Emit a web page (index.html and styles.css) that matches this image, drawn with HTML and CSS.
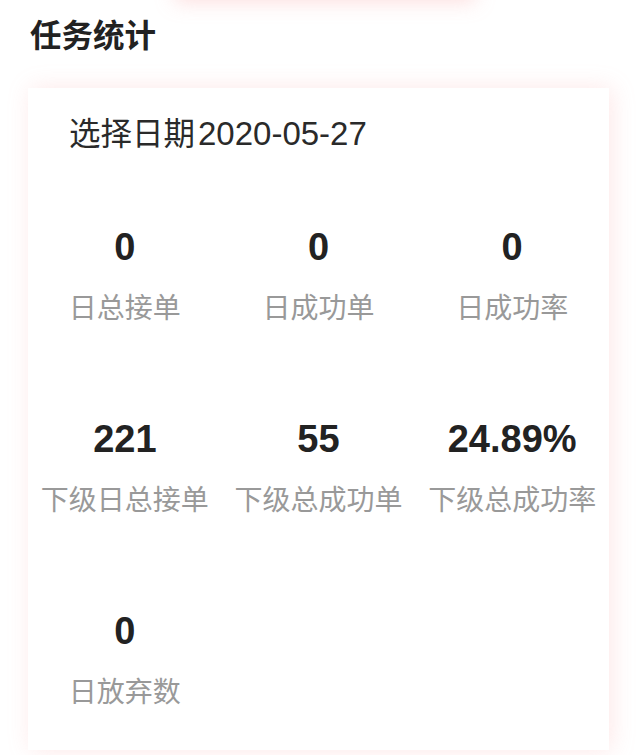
FILE: index.html
```html
<!DOCTYPE html>
<html lang="zh-CN">
<head>
<meta charset="utf-8">
<title>任务统计</title>
<link rel="stylesheet" href="styles.css">
</head>
<body>
<div class="page">
  <div class="prev-glow"></div>
  <h2 class="section-title">任务统计</h2>
  <div class="card">
    <div class="date-row">选择日期<span class="date-val">2020-05-27</span></div>
    <div class="stats">
      <div class="stat"><div class="num">0</div><div class="label">日总接单</div></div>
      <div class="stat"><div class="num">0</div><div class="label">日成功单</div></div>
      <div class="stat"><div class="num">0</div><div class="label">日成功率</div></div>
      <div class="stat"><div class="num">221</div><div class="label">下级日总接单</div></div>
      <div class="stat"><div class="num">55</div><div class="label">下级总成功单</div></div>
      <div class="stat"><div class="num">24.89%</div><div class="label">下级总成功率</div></div>
      <div class="stat"><div class="num">0</div><div class="label">日放弃数</div></div>
    </div>
  </div>
</div>
</body>
</html>
```

FILE: styles.css
```css
html, body {
  margin: 0;
  padding: 0;
  background: #ffffff;
}

body {
  font-family: "Liberation Sans", "Noto Sans CJK SC", sans-serif;
  color: #222222;
  width: 638px;
  height: 755px;
  overflow: hidden;
}

.page {
  position: relative;
}

.prev-glow {
  width: 300px;
  height: 30px;
  margin: -30px 0 0 175px;
  background: #ffffff;
  box-shadow: 0 2px 20px rgba(250, 160, 160, 0.35);
}

.section-title {
  margin: 13px 0 0 30px;
  font-size: 31.5px;
  line-height: 40px;
  font-weight: bold;
  color: #222222;
  font-family: "Noto Sans CJK SC", sans-serif;
}

.card {
  margin: 35px 29px 0 28px;
  background: #ffffff;
  padding: 23px 0 40px 0;
  box-shadow: 3px 0 22px rgba(250, 150, 150, 0.22);
}

.date-row {
  padding-left: 41px;
  font-size: 31.5px;
  line-height: 40px;
  color: #2a2a2a;
  font-family: "Noto Sans CJK SC", sans-serif;
}

.date-val {
  font-family: "Liberation Sans", sans-serif;
  font-size: 33px;
  margin-left: 3px;
}

.stats {
  margin-top: 70.5px;
  display: grid;
  grid-template-columns: repeat(3, 1fr);
  row-gap: 91px;
}

.stat {
  display: flex;
  flex-direction: column;
  align-items: center;
  gap: 17px;
}

.num {
  font-size: 38px;
  line-height: 44px;
  font-weight: bold;
  color: #222222;
}

.label {
  font-size: 28px;
  line-height: 40px;
  color: #999999;
  font-family: "Noto Sans CJK SC", sans-serif;
  white-space: nowrap;
}
```
